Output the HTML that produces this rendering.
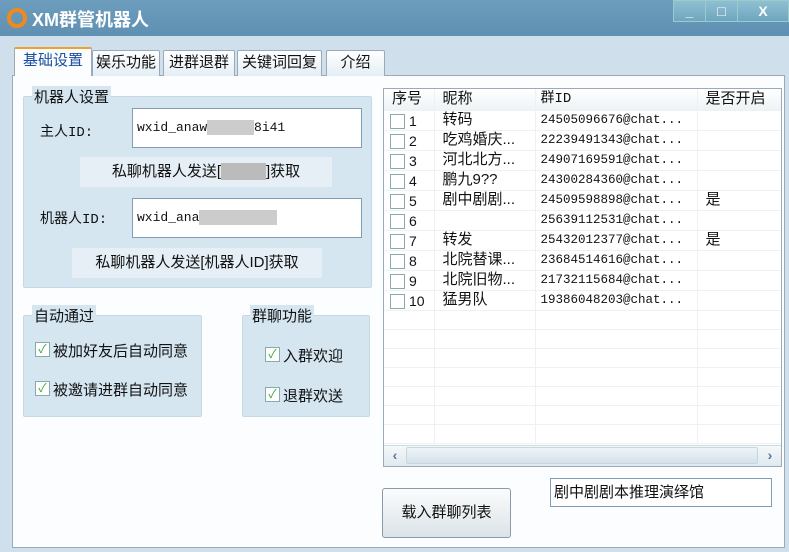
<!DOCTYPE html>
<html><head><meta charset="utf-8"><style>
*{box-sizing:border-box;margin:0;padding:0}
body{width:789px;height:552px;overflow:hidden;background:#cfe0ec;font-family:"Liberation Sans","Noto Sans CJK SC",sans-serif;position:relative;color:#111}
.abs{position:absolute}
.title{left:0;top:0;width:789px;height:36px;background:linear-gradient(#6d9dbd,#5f90b2);}
.tb{top:0;height:22px;background:linear-gradient(#8fc0d2,#6fa6bf);border:1px solid #9cc;color:#fff;text-align:center;font-size:14px;font-weight:bold;line-height:20px}
.tab{top:50px;height:26px;background:linear-gradient(#fff,#e3eef5);border:1px solid #9ab;border-bottom:none;font-size:15px;line-height:24px;text-align:center;border-radius:2px 2px 0 0}
.panel{left:12px;top:75px;width:773px;height:473px;background:#fbfdfe;border:1px solid #9ab}
.grp{background:#d5e6f0;border:1px solid #c5d8e4;border-radius:2px}
.gt{font-size:15px;background:#d5e6f0;padding:0 2px}
.inp{background:#fff;border:1px solid #7f9db9;font-family:"Liberation Mono","Noto Sans CJK SC",monospace;font-size:13px;padding:0 0 0 4px;line-height:38px}
.lbl{background:#e6eff5;font-size:15px;text-align:center;line-height:30px}
.cb{width:15px;height:15px;border:1px solid #8aa;background:#fff;display:inline-block;position:absolute}
.ck{font-size:15px}
.ck .cb{left:0;top:2px;color:#3a3;font-size:12px;line-height:13px;text-align:center}
table{border-collapse:collapse;font-size:14px;line-height:18px;table-layout:fixed}
tr{height:19px}
td{height:19px;border-bottom:1px solid #eef1f3;border-right:1px solid #eef1f3;padding:0;white-space:nowrap;overflow:hidden;vertical-align:middle}
.r td .cb{position:relative;top:3px;margin:0 4px 0 6px}
.mono{font-family:"Liberation Mono",monospace;font-size:12.5px;padding-left:5px}
</style></head><body>
<div class="abs title"></div>
<div class="abs" style="left:7px;top:8px;width:20px;height:20px;border-radius:50%;border:4px solid #f08a1c"></div>
<div class="abs" style="left:32px;top:6px;color:#fff;font-size:18px;font-weight:bold">XM群管机器人</div>
<div class="abs tb" style="left:673px;width:33px">_</div>
<div class="abs tb" style="left:705px;width:33px">□</div>
<div class="abs tb" style="left:737px;width:52px">X</div>

<div class="abs panel"></div>
<div class="abs tab" style="left:14px;top:47px;width:78px;height:29px;background:#fbfdfe;color:#1a4fa0;border-top:2px solid #f0a030">基础设置</div>
<div class="abs tab" style="left:92px;width:68px">娱乐功能</div>
<div class="abs tab" style="left:163px;width:72px">进群退群</div>
<div class="abs tab" style="left:237px;width:85px">关键词回复</div>
<div class="abs tab" style="left:326px;width:59px">介绍</div>

<div class="abs grp" style="left:23px;top:96px;width:349px;height:192px"></div>
<div class="abs gt" style="left:32px;top:86px">机器人设置</div>
<div class="abs lbl" style="left:40px;top:118px;width:90px;background:none;text-align:left;font-family:'Liberation Mono','Noto Sans CJK SC',monospace;font-size:14px">主人ID:</div>
<div class="abs inp" style="left:132px;top:108px;width:230px;height:40px">wxid_anaw<span style="background:#ccc;color:#ccc">xxxxxx</span>8i41</div>
<div class="abs lbl" style="left:80px;top:157px;width:252px">私聊机器人发送[<span style="background:#bbb;color:#bbb">主人ID</span>]获取</div>
<div class="abs lbl" style="left:40px;top:205px;width:90px;background:none;text-align:left;font-family:'Liberation Mono','Noto Sans CJK SC',monospace;font-size:14px">机器人ID:</div>
<div class="abs inp" style="left:132px;top:198px;width:230px;height:40px">wxid_ana<span style="background:#ccc;color:#ccc">xxxxxxxxxx</span></div>
<div class="abs lbl" style="left:72px;top:248px;width:250px">私聊机器人发送[机器人ID]获取</div>

<div class="abs grp" style="left:23px;top:315px;width:179px;height:102px"></div>
<div class="abs gt" style="left:32px;top:305px">自动通过</div>
<div class="abs ck" style="left:35px;top:340px"><span class="cb">✓</span><span style="padding-left:18px">被加好友后自动同意</span></div>
<div class="abs ck" style="left:35px;top:379px"><span class="cb">✓</span><span style="padding-left:18px">被邀请进群自动同意</span></div>
<div class="abs grp" style="left:242px;top:315px;width:128px;height:102px"></div>
<div class="abs gt" style="left:250px;top:305px">群聊功能</div>
<div class="abs ck" style="left:265px;top:345px"><span class="cb">✓</span><span style="padding-left:18px">入群欢迎</span></div>
<div class="abs ck" style="left:265px;top:385px"><span class="cb">✓</span><span style="padding-left:18px">退群欢送</span></div>

<div class="abs" style="left:383px;top:88px;width:399px;height:379px;background:#fff;border:1px solid #9ab;overflow:hidden">
<table style="width:420px">
<colgroup><col style="width:50px"><col style="width:101px"><col style="width:162px"><col style="width:107px"></colgroup>
<tr style="background:linear-gradient(#fff,#eef3f6);height:21px"><td style="padding-left:8px;font-size:15px;height:21px">序号</td><td style="padding-left:8px;font-size:15px">昵称</td><td style="padding-left:5px;font-family:'Liberation Mono','Noto Sans CJK SC';font-size:14px">群ID</td><td style="font-size:15px;padding-left:8px">是否开启</td></tr>
<tr class="r"><td><span class="cb"></span>1</td><td style="padding-left:8px;font-size:15px">转码</td><td class="mono">24505096676@chat...</td><td></td></tr>
<tr class="r"><td><span class="cb"></span>2</td><td style="padding-left:8px;font-size:15px">吃鸡婚庆...</td><td class="mono">22239491343@chat...</td><td></td></tr>
<tr class="r"><td><span class="cb"></span>3</td><td style="padding-left:8px;font-size:15px">河北北方...</td><td class="mono">24907169591@chat...</td><td></td></tr>
<tr class="r"><td><span class="cb"></span>4</td><td style="padding-left:8px;font-size:15px">鹏九9??</td><td class="mono">24300284360@chat...</td><td></td></tr>
<tr class="r"><td><span class="cb"></span>5</td><td style="padding-left:8px;font-size:15px">剧中剧剧...</td><td class="mono">24509598898@chat...</td><td style="padding-left:8px;font-size:15px">是</td></tr>
<tr class="r"><td><span class="cb"></span>6</td><td></td><td class="mono">25639112531@chat...</td><td></td></tr>
<tr class="r"><td><span class="cb"></span>7</td><td style="padding-left:8px;font-size:15px">转发</td><td class="mono">25432012377@chat...</td><td style="padding-left:8px;font-size:15px">是</td></tr>
<tr class="r"><td><span class="cb"></span>8</td><td style="padding-left:8px;font-size:15px">北院替课...</td><td class="mono">23684514616@chat...</td><td></td></tr>
<tr class="r"><td><span class="cb"></span>9</td><td style="padding-left:8px;font-size:15px">北院旧物...</td><td class="mono">21732115684@chat...</td><td></td></tr>
<tr class="r"><td><span class="cb"></span>10</td><td style="padding-left:8px;font-size:15px">猛男队</td><td class="mono">19386048203@chat...</td><td></td></tr>
<tr><td></td><td></td><td></td><td></td></tr><tr><td></td><td></td><td></td><td></td></tr><tr><td></td><td></td><td></td><td></td></tr><tr><td></td><td></td><td></td><td></td></tr><tr><td></td><td></td><td></td><td></td></tr><tr><td></td><td></td><td></td><td></td></tr><tr><td></td><td></td><td></td><td></td></tr>
</table>
<div class="abs" style="left:0;top:356px;width:397px;height:21px;background:linear-gradient(#f4f8fa,#dfe9ef);border-top:1px solid #cdd">
<div class="abs" style="left:2px;top:1px;width:18px;height:18px;color:#579;font-size:14px;font-weight:bold;text-align:center">‹</div>
<div class="abs" style="left:22px;top:1px;width:352px;height:17px;background:linear-gradient(#eef4f7,#d5e2ea);border:1px solid #c8d6de;border-radius:2px"></div>
<div class="abs" style="left:377px;top:1px;width:18px;height:18px;color:#579;font-size:14px;font-weight:bold;text-align:center">›</div>
</div>
</div>

<div class="abs" style="left:382px;top:488px;width:129px;height:50px;background:linear-gradient(#fbfcfd,#dbe3e8);border:1px solid #8a9aa8;border-radius:3px;font-size:15px;text-align:center;line-height:48px">载入群聊列表</div>
<div class="abs" style="left:550px;top:478px;width:222px;height:29px;background:#fff;border:1px solid #7f9db9;font-size:15px;line-height:27px;padding-left:3px">剧中剧剧本推理演绎馆</div>
</body></html>
